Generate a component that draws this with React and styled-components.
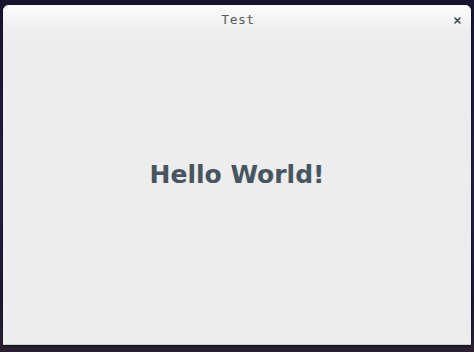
import React from "react";
import styled, { createGlobalStyle } from "styled-components";

const Global = createGlobalStyle`
  html, body { margin: 0; padding: 0; width: 474px; height: 352px; overflow: hidden; }
  #root { width: 474px; height: 352px; }
`;

const Desktop = styled.div`
  width: 474px;
  height: 352px;
  box-sizing: border-box;
  padding: 5px 3px 7px 3px;
  background: linear-gradient(180deg, #17152e 0%, #221f3e 50%, #1b1a33 85%, #2a2030 100%);
  display: flex;
`;

const Window = styled.div`
  flex: 1;
  display: flex;
  flex-direction: column;
  background: #ededed;
  border-radius: 6px 6px 0 0;
  border-bottom: 1px solid #cfcfcf;
  overflow: hidden;
  box-shadow: 0 1px 2px rgba(0, 0, 0, 0.6);
`;

const TitleBar = styled.div`
  height: 30px;
  display: grid;
  grid-template-columns: 1fr auto 1fr;
  align-items: center;
  background: linear-gradient(180deg, #fbfbfb 0%, #f1f1f1 70%, #ededed 100%);
  padding: 0 8px 0 10px;
`;

const Title = styled.div`
  grid-column: 2;
  font-family: "DejaVu Sans Mono", "Liberation Mono", monospace;
  font-size: 13px;
  color: #5a5a5a;
  letter-spacing: 0.5px;
  font-weight: 300;
  padding-bottom: 1px;
`;

const CloseButton = styled.div`
  grid-column: 3;
  justify-self: end;
  width: 12px;
  height: 12px;
  display: flex;
  align-items: center;
  justify-content: center;
`;

const Content = styled.div`
  flex: 1;
  display: flex;
  align-items: center;
  justify-content: center;
  padding-bottom: 30px;
`;

const Hello = styled.h1`
  margin: 0;
  font-family: "DejaVu Sans", "Noto Sans", sans-serif;
  font-weight: bold;
  font-size: 25px;
  color: #46555f;
`;

export default function App() {
  return (
    <>
      <Global />
      <Desktop>
        <Window>
          <TitleBar>
            <Title>Test</Title>
            <CloseButton>
              <svg width="7" height="7" viewBox="0 0 7 7">
                <path d="M1 1 L6 6 M6 1 L1 6" stroke="#3c4850" strokeWidth="1.6" strokeLinecap="round" />
              </svg>
            </CloseButton>
          </TitleBar>
          <Content>
            <Hello>Hello World!</Hello>
          </Content>
        </Window>
      </Desktop>
    </>
  );
}
